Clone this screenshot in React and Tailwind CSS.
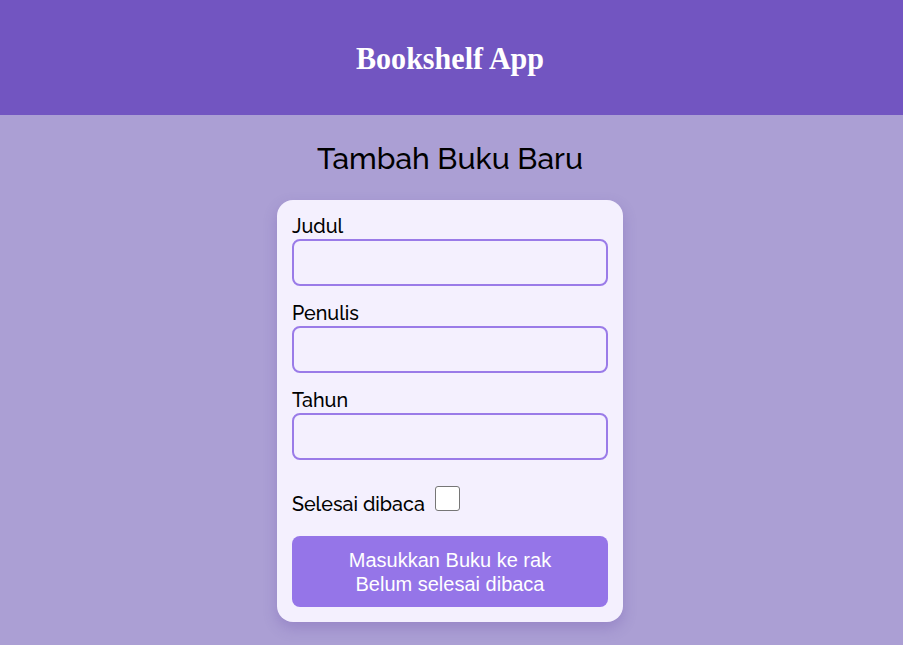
export default function App() {
  const fields = ['Judul', 'Penulis', 'Tahun'];

  return (
    <div className="min-h-[645px] bg-[#ab9fd4] font-['Raleway','Lato','Noto_Sans',sans-serif]">
      <header className="h-[115px] bg-[#7255c1] flex items-center justify-center pr-[3px]">
        <h1 className="text-[32px] font-bold text-white font-['Liberation_Serif',serif] scale-x-[0.94] pt-[1px]">
          Bookshelf App
        </h1>
      </header>

      <main className="flex flex-col items-center pr-[3px]">
        <h2 className="mt-[24px] text-[30px] leading-[40px] font-medium text-black">Tambah Buku Baru</h2>

        <form className="mt-[21px] w-[346px] bg-[#f4f0fe] rounded-[16px] px-[15px] pt-[14px] pb-[15px] shadow-[0_6px_14px_rgba(90,60,160,0.25)]">
          {fields.map((f) => (
            <div key={f} className="mb-[15px]">
              <label className="block text-[19.7px] leading-[25px] font-medium text-black">{f}</label>
              <input
                type="text"
                className="block w-full h-[47px] rounded-[8px] border-2 border-[#9a7be8] bg-[#f4f0fe] outline-none"
              />
            </div>
          ))}

          <div className="mt-[26px] flex items-end h-[28px]">
            <span className="-mb-[2px] text-[19.7px] leading-[24px] font-medium text-black">Selesai dibaca</span>
            <input
              type="checkbox"
              className="appearance-none ml-[10px] mb-[3px] w-[25px] h-[25px] rounded-[3px] border border-[#767676] bg-white"
            />
          </div>

          <button
            type="button"
            className="mt-[22px] w-full h-[71px] rounded-[8px] bg-[#9575e8] text-white text-[20px] leading-[24px] font-['Liberation_Sans',Arial,sans-serif]"
          >
            Masukkan Buku ke rak
            <br />
            Belum selesai dibaca
          </button>
        </form>
      </main>
    </div>
  );
}
